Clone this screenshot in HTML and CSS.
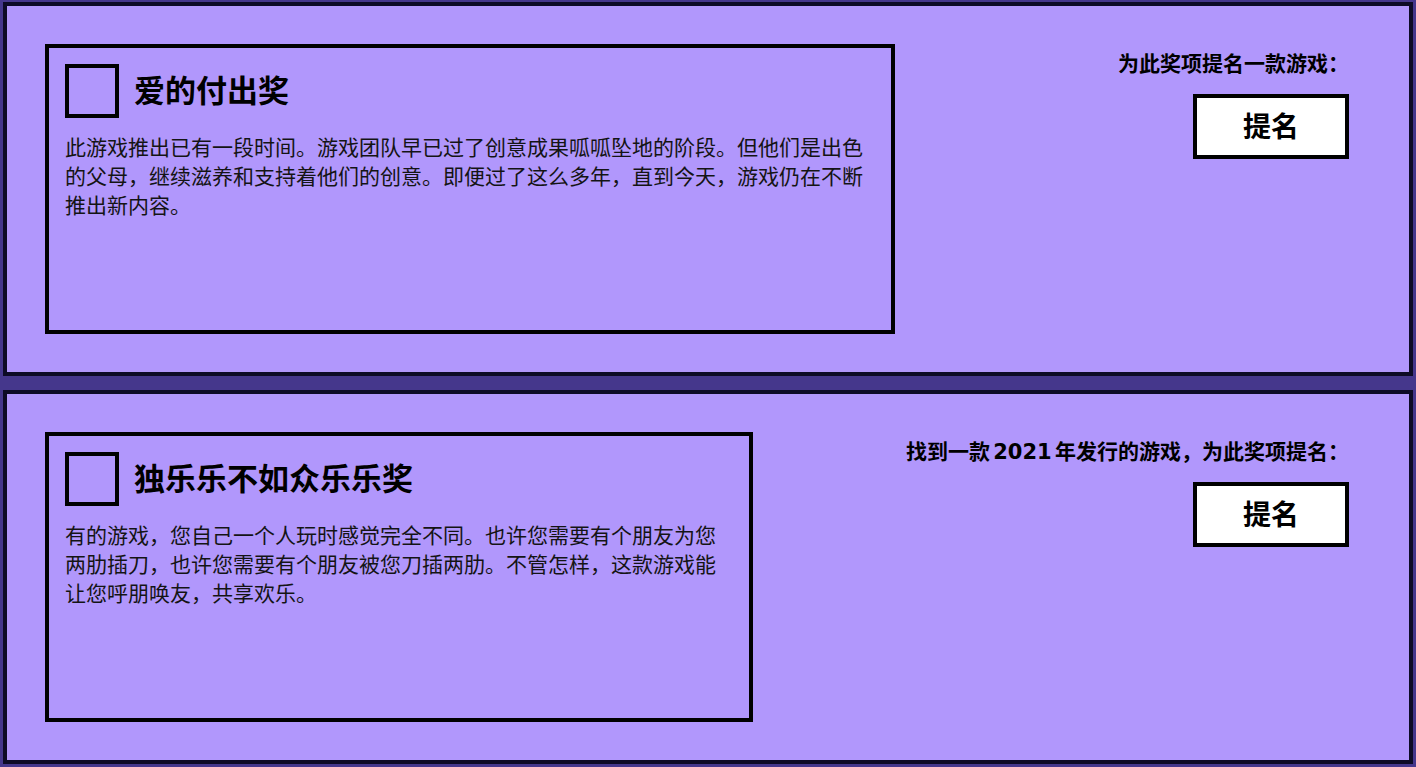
FILE: index.html
```html
<!DOCTYPE html>
<html lang="zh-CN">
<head>
<meta charset="utf-8">
<title>奖项提名</title>
<link rel="stylesheet" href="styles.css">
</head>
<body>
<main class="awards">
  <section class="award">
    <div class="card card-wide">
      <div class="card-head">
        <span class="check"></span>
        <h2 class="card-title">爱的付出奖</h2>
      </div>
      <p class="card-desc">此游戏推出已有一段时间。游戏团队早已过了创意成果呱呱坠地的阶段。但他们是出色的父母，继续滋养和支持着他们的创意。即便过了这么多年，直到今天，游戏仍在不断推出新内容。</p>
    </div>
    <div class="side">
      <p class="side-label">为此奖项提名一款游戏：</p>
      <button class="nominate" type="button">提名</button>
    </div>
  </section>
  <section class="award">
    <div class="card card-narrow">
      <div class="card-head">
        <span class="check"></span>
        <h2 class="card-title">独乐乐不如众乐乐奖</h2>
      </div>
      <p class="card-desc">有的游戏，您自己一个人玩时感觉完全不同。也许您需要有个朋友为您两肋插刀，也许您需要有个朋友被您刀插两肋。不管怎样，这款游戏能让您呼朋唤友，共享欢乐。</p>
    </div>
    <div class="side">
      <p class="side-label">找到一款 2021 年发行的游戏，为此奖项提名：</p>
      <button class="nominate" type="button">提名</button>
    </div>
  </section>
</main>
</body>
</html>
```
FILE: styles.css
```css
* { box-sizing: border-box; }

html, body {
  margin: 0;
  height: 100%;
}

body {
  background: #45378c;
  padding: 2px 3px 3px;
  font-family: "DejaVu Sans", "Noto Sans CJK SC", sans-serif;
  color: #000;
  overflow: hidden;
}

.awards {
  display: flex;
  flex-direction: column;
  gap: 14px;
}

.award {
  display: flex;
  justify-content: space-between;
  align-items: flex-start;
  background: #b197fc;
  border: 4px solid #0d0b26;
  padding: 38px;
}

.card {
  height: 290px;
  border: 4px solid #000;
  padding: 16px;
}

.card-wide { width: 850px; }
.card-narrow { width: 708px; }

.card-head {
  display: flex;
  align-items: center;
  margin-bottom: 14px;
}

.check {
  width: 54px;
  height: 54px;
  border: 4px solid #000;
  flex: none;
}

.card-title {
  margin: 0 0 0 15px;
  padding-bottom: 5px;
  font-family: "Noto Sans CJK SC", sans-serif;
  font-size: 31px;
  font-weight: 700;
  line-height: 40px;
}

.card-desc {
  margin: 0;
  font-family: "Noto Sans CJK SC", sans-serif;
  font-size: 21px;
  line-height: 29px;
  color: #141414;
}

.side {
  display: flex;
  flex-direction: column;
  align-items: flex-end;
  margin-right: 22px;
}

.side-label {
  margin: 8px 0 18px;
  font-size: 21px;
  font-weight: 700;
  line-height: 24px;
  word-spacing: -4px;
  white-space: nowrap;
}

.nominate {
  width: 156px;
  height: 65px;
  background: #fff;
  border: 4px solid #000;
  padding: 0 0 4px;
  font-family: "Noto Sans CJK SC", sans-serif;
  font-size: 28px;
  font-weight: 700;
  color: #000;
  cursor: pointer;
}
```
